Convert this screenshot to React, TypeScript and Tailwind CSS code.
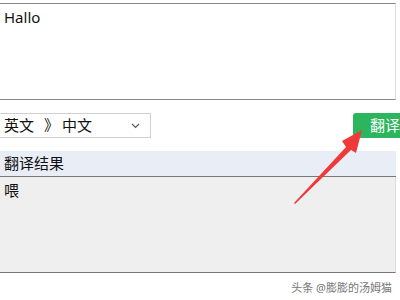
import React from 'react';

const font = { fontFamily: '"Microsoft YaHei", "Noto Sans", "Noto Sans CJK SC", sans-serif' };

function Arrow() {
  return (
    <svg className="absolute left-0 top-0 pointer-events-none" width="400" height="300" viewBox="0 0 400 300">
      <polygon
        points="294,203 346,147 342,141 362,130 356,153 351,150 295,204"
        fill="#f03a3a"
      />
    </svg>
  );
}

export default function App() {
  return (
    <div className="relative w-[400px] h-[300px] bg-white overflow-hidden text-[#111]" style={font}>
      <div className="pt-[3px]">
        <div className="w-[396px] h-[97px] border-t border-b border-r border-t-[#888] border-b-[#888] border-r-[#ddd] px-[4px] pt-[3px] text-[15px] leading-[20px]">
          Hallo
        </div>
      </div>

      <div className="mt-[13px] flex items-center justify-between h-[25px]">
        <div className="w-[151px] h-[25px] border border-l-0 border-[#d0d0d0] flex items-center justify-between pl-[4px] pr-[10px] text-[15px]">
          <span className="flex items-center">
            <span>英文</span>
            <span className="ml-[10px] mr-[3px]">》</span>
            <span>中文</span>
          </span>
          <svg width="9" height="6" viewBox="0 0 9 6">
            <path d="M1 1l3.5 3.5L8 1" fill="none" stroke="#555" strokeWidth="1.1" />
          </svg>
        </div>
        <div className="w-[47px] h-[25px] bg-[#2db55d] rounded-l-[3px] text-white text-[15px] flex items-center pl-[17px] whitespace-nowrap">
          翻译
        </div>
      </div>

      <div className="mt-[13px] w-[396px] h-[26px] bg-[#e9edf6] border-b border-[#777] flex items-center px-[4px] text-[15px]">
        翻译结果
      </div>
      <div className="w-[396px] h-[96px] bg-[#efefef] border-b border-r border-b-[#777] border-r-[#ddd] px-[4px] pt-[3px] text-[15px] leading-[20px]">
        喂
      </div>

      <div className="mt-[7px] pr-[8px] text-right text-[11px] text-[#777]">头条 @膨膨的汤姆猫</div>

      <Arrow />
    </div>
  );
}
